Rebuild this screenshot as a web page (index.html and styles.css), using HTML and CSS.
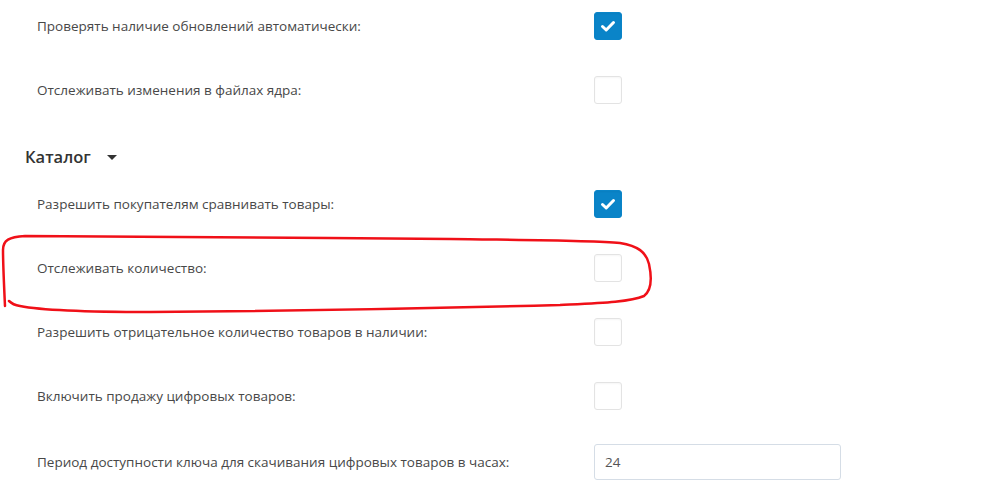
FILE: index.html
```html
<!DOCTYPE html>
<html lang="ru">
<head>
<meta charset="utf-8">
<link rel="stylesheet" href="styles.css">
</head>
<body>
<div class="page">
  <div class="row">
    <div class="label">Проверять наличие обновлений автоматически:</div>
    <div class="control"><span class="cb checked"><svg viewBox="0 0 28 28" width="28" height="28"><path d="M8.5 14.5 L12.2 18 L19.5 10.5" fill="none" stroke="#fff" stroke-width="3" stroke-linecap="round" stroke-linejoin="round"/></svg></span></div>
  </div>
  <div class="row">
    <div class="label">Отслеживать изменения в файлах ядра:</div>
    <div class="control"><span class="cb"></span></div>
  </div>
  <div class="heading">Каталог <span class="caret"></span></div>
  <div class="row">
    <div class="label">Разрешить покупателям сравнивать товары:</div>
    <div class="control"><span class="cb checked"><svg viewBox="0 0 28 28" width="28" height="28"><path d="M8.5 14.5 L12.2 18 L19.5 10.5" fill="none" stroke="#fff" stroke-width="3" stroke-linecap="round" stroke-linejoin="round"/></svg></span></div>
  </div>
  <div class="row">
    <div class="label">Отслеживать количество:</div>
    <div class="control"><span class="cb"></span></div>
  </div>
  <div class="row">
    <div class="label">Разрешить отрицательное количество товаров в наличии:</div>
    <div class="control"><span class="cb"></span></div>
  </div>
  <div class="row">
    <div class="label">Включить продажу цифровых товаров:</div>
    <div class="control"><span class="cb"></span></div>
  </div>
  <div class="row row-input">
    <div class="label">Период доступности ключа для скачивания цифровых товаров в часах:</div>
    <div class="control"><div class="input">24</div></div>
  </div>
</div>
<svg class="annot" width="1000" height="497" viewBox="0 0 1000 497">
  <path d="M5 306 C4 285 3 262 3 250 C3 240 9 237 25 236 C120 236 300 238 450 239 C520 240 590 240 620 243 C638 246 646 252 649 264 C652 278 652 290 644 296 C630 302 600 303 560 305 C450 308 300 311 150 312 C90 312 40 310 20 306 C14 305 11 303 9 301" fill="none" stroke="#f01018" stroke-width="2.5" stroke-linecap="round" stroke-linejoin="round"/>
</svg>
</body>
</html>
```

FILE: styles.css
```css
* { box-sizing: border-box; }
html, body { margin: 0; padding: 0; background: #fff; overflow: hidden; }
body {
  width: 1000px;
  height: 497px;
  position: relative;
  font-family: "Open Sans", "Noto Sans", sans-serif;
  font-size: 13.5px;
  color: #484848;
}
.page {
  margin-top: -6px;
  padding-left: 25px;
}
.row {
  display: flex;
  align-items: center;
  height: 64px;
}
.label {
  width: 569px;
  padding-left: 12px;
  line-height: 20px;
}
.control {
  display: flex;
  align-items: center;
}
.cb {
  display: block;
  width: 28px;
  height: 28px;
  border: 1px solid #e3e3e3;
  border-radius: 3px;
  background: #fff;
  box-shadow: inset 0 1px 2px rgba(0,0,0,0.04);
}
.cb.checked {
  background: #0a84c8;
  border-color: #0a84c8;
}
.cb.checked svg { display: block; margin: -1px; }
.heading {
  height: 50px;
  padding-top: 22px;
  padding-bottom: 2px;
  line-height: 20px;
  font-size: 16.5px;
  font-weight: 600;
  color: #333;
  display: flex;
  align-items: center;
}
.caret {
  display: inline-block;
  margin-left: 16px;
  width: 0;
  height: 0;
  border-left: 5px solid transparent;
  border-right: 5px solid transparent;
  border-top: 5px solid #333;
}
.row-input { height: 68px; }
.input {
  width: 247px;
  height: 36px;
  border: 1px solid #d5dde6;
  border-radius: 3px;
  padding-left: 10px;
  line-height: 34px;
  color: #555;
  font-size: 13.5px;
}
.annot {
  position: absolute;
  left: 0;
  top: 0;
  pointer-events: none;
}
```
